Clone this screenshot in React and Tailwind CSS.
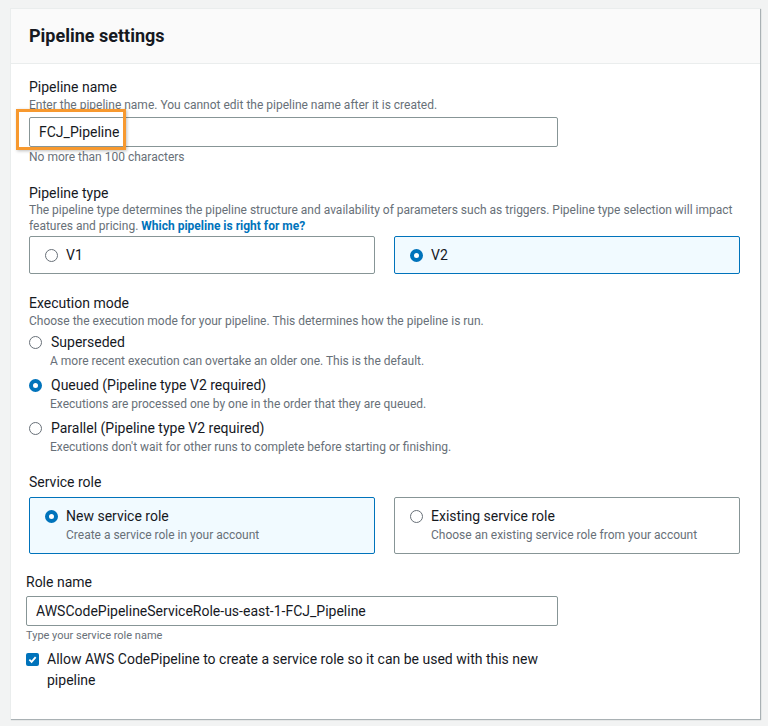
import React from "react";

const FONT = { fontFamily: 'Roboto, "Noto Sans", Arial, sans-serif' };

function Radio({ checked }) {
  return checked ? (
    <span className="inline-block w-[13px] h-[13px] rounded-full border-[4px] border-[#0073bb] bg-white shrink-0" />
  ) : (
    <span className="inline-block w-[13px] h-[13px] rounded-full border-[1.5px] border-[#687078] bg-white shrink-0" />
  );
}

function Label({ children, className = "" }) {
  return <div className={"text-[14px] leading-[20px] text-[#16191f] " + className}>{children}</div>;
}

function Desc({ children, className = "" }) {
  return <div className={"text-[12px] leading-[16px] text-[#687078] " + className}>{children}</div>;
}

function Option({ checked, title, desc }) {
  return (
    <div className="flex flex-col">
      <div className="flex items-center gap-[9px] h-[20px]">
        <Radio checked={checked} />
        <span className="text-[14px] leading-[20px] text-[#16191f]">{title}</span>
      </div>
      <div className="pl-[21px] text-[12px] leading-[16px] text-[#687078] mt-[1px]">{desc}</div>
    </div>
  );
}

export default function App() {
  return (
    <div className="w-[768px] h-[726px] bg-[#f2f3f3] pt-[8px] pl-[10px] overflow-hidden" style={FONT}>
      <div className="w-[750px] h-[711px] bg-white border-t border-l border-[#eaeded] shadow-[1px_1px_1px_0_rgba(0,28,36,0.3)]">
        <div className="h-[55px] bg-[#fafafa] border-b border-[#eaeded] flex items-center pl-[18px]">
          <h2 className="text-[18px] font-bold text-[#16191f] leading-[22px]">Pipeline settings</h2>
        </div>
        <div className="pl-[18px] pr-[20px] pt-[13px]">
          {/* Pipeline name */}
          <Label>Pipeline name</Label>
          <Desc className="h-[20px]">Enter the pipeline name. You cannot edit the pipeline name after it is created.</Desc>
          <div className="relative w-[529px]">
            <div className="h-[30px] border border-[#879596] rounded-[2px] flex items-center pl-[9px] text-[14px] text-[#16191f]">
              FCJ_Pipeline
            </div>
            <div className="absolute left-[-13px] top-[-8px] w-[110px] h-[41px] border-[3px] border-[#f7992f] shadow-[1px_1px_3px_rgba(0,0,0,0.25)]" />
          </div>
          <Desc className="mt-[2px]">No more than 100 characters</Desc>

          {/* Pipeline type */}
          <Label className="mt-[18px]">Pipeline type</Label>
          <Desc className="-mt-[1px]">
            The pipeline type determines the pipeline structure and availability of parameters such as triggers. Pipeline type selection will impact features and pricing.{" "}
            <span className="font-bold text-[#0073bb]">Which pipeline is right for me?</span>
          </Desc>
          <div className="grid grid-cols-2 gap-[19px] mt-[2px]">
            <div className="h-[38px] border border-[#879596] rounded-[2px] flex items-center pl-[15px] gap-[8px]">
              <Radio checked={false} />
              <span className="text-[14px] text-[#16191f]">V1</span>
            </div>
            <div className="h-[38px] border border-[#0073bb] bg-[#f1faff] rounded-[2px] flex items-center pl-[15px] gap-[8px]">
              <Radio checked={true} />
              <span className="text-[14px] text-[#16191f]">V2</span>
            </div>
          </div>

          {/* Execution mode */}
          <Label className="mt-[19px]">Execution mode</Label>
          <Desc>Choose the execution mode for your pipeline. This determines how the pipeline is run.</Desc>
          <div className="flex flex-col gap-[6px] mt-[3px]">
            <Option checked={false} title="Superseded" desc="A more recent execution can overtake an older one. This is the default." />
            <Option checked={true} title="Queued (Pipeline type V2 required)" desc="Executions are processed one by one in the order that they are queued." />
            <Option checked={false} title="Parallel (Pipeline type V2 required)" desc="Executions don't wait for other runs to complete before starting or finishing." />
          </div>

          {/* Service role */}
          <Label className="mt-[17px]">Service role</Label>
          <div className="grid grid-cols-2 gap-[19px] mt-[5px]">
            <div className="h-[57px] border border-[#0073bb] bg-[#f1faff] rounded-[2px] pl-[15px] pt-[8px]">
              <div className="flex items-center gap-[8px] h-[20px]">
                <Radio checked={true} />
                <span className="text-[14px] text-[#16191f]">New service role</span>
              </div>
              <div className="pl-[21px] text-[12px] leading-[16px] text-[#687078] mt-[1px]">Create a service role in your account</div>
            </div>
            <div className="h-[57px] border border-[#879596] rounded-[2px] pl-[15px] pt-[8px]">
              <div className="flex items-center gap-[8px] h-[20px]">
                <Radio checked={false} />
                <span className="text-[14px] text-[#16191f]">Existing service role</span>
              </div>
              <div className="pl-[21px] text-[12px] leading-[16px] text-[#687078] mt-[1px]">Choose an existing service role from your account</div>
            </div>
          </div>

          {/* Role name */}
          <div className="ml-[-3px] mt-[18px]">
            <Label>Role name</Label>
            <div className="w-[532px] h-[30px] mt-[4px] border border-[#879596] rounded-[2px] flex items-center pl-[9px] text-[14px] text-[#16191f]">
              AWSCodePipelineServiceRole-us-east-1-FCJ_Pipeline
            </div>
            <div className="text-[11px] leading-[16px] text-[#687078] mt-[2px]">Type your service role name</div>
            <div className="flex items-start gap-[8px] mt-[5px]">
              <span className="w-[13px] h-[13px] mt-[4px] rounded-[2px] bg-[#0073bb] flex items-center justify-center shrink-0">
                <svg width="9" height="9" viewBox="0 0 10 10">
                  <path d="M1.5 5.2 L4 7.6 L8.5 2.4" fill="none" stroke="white" strokeWidth="2" />
                </svg>
              </span>
              <span className="text-[14px] leading-[21px] text-[#16191f] w-[505px]">
                Allow AWS CodePipeline to create a service role so it can be used with this new pipeline
              </span>
            </div>
          </div>
        </div>
      </div>
    </div>
  );
}
